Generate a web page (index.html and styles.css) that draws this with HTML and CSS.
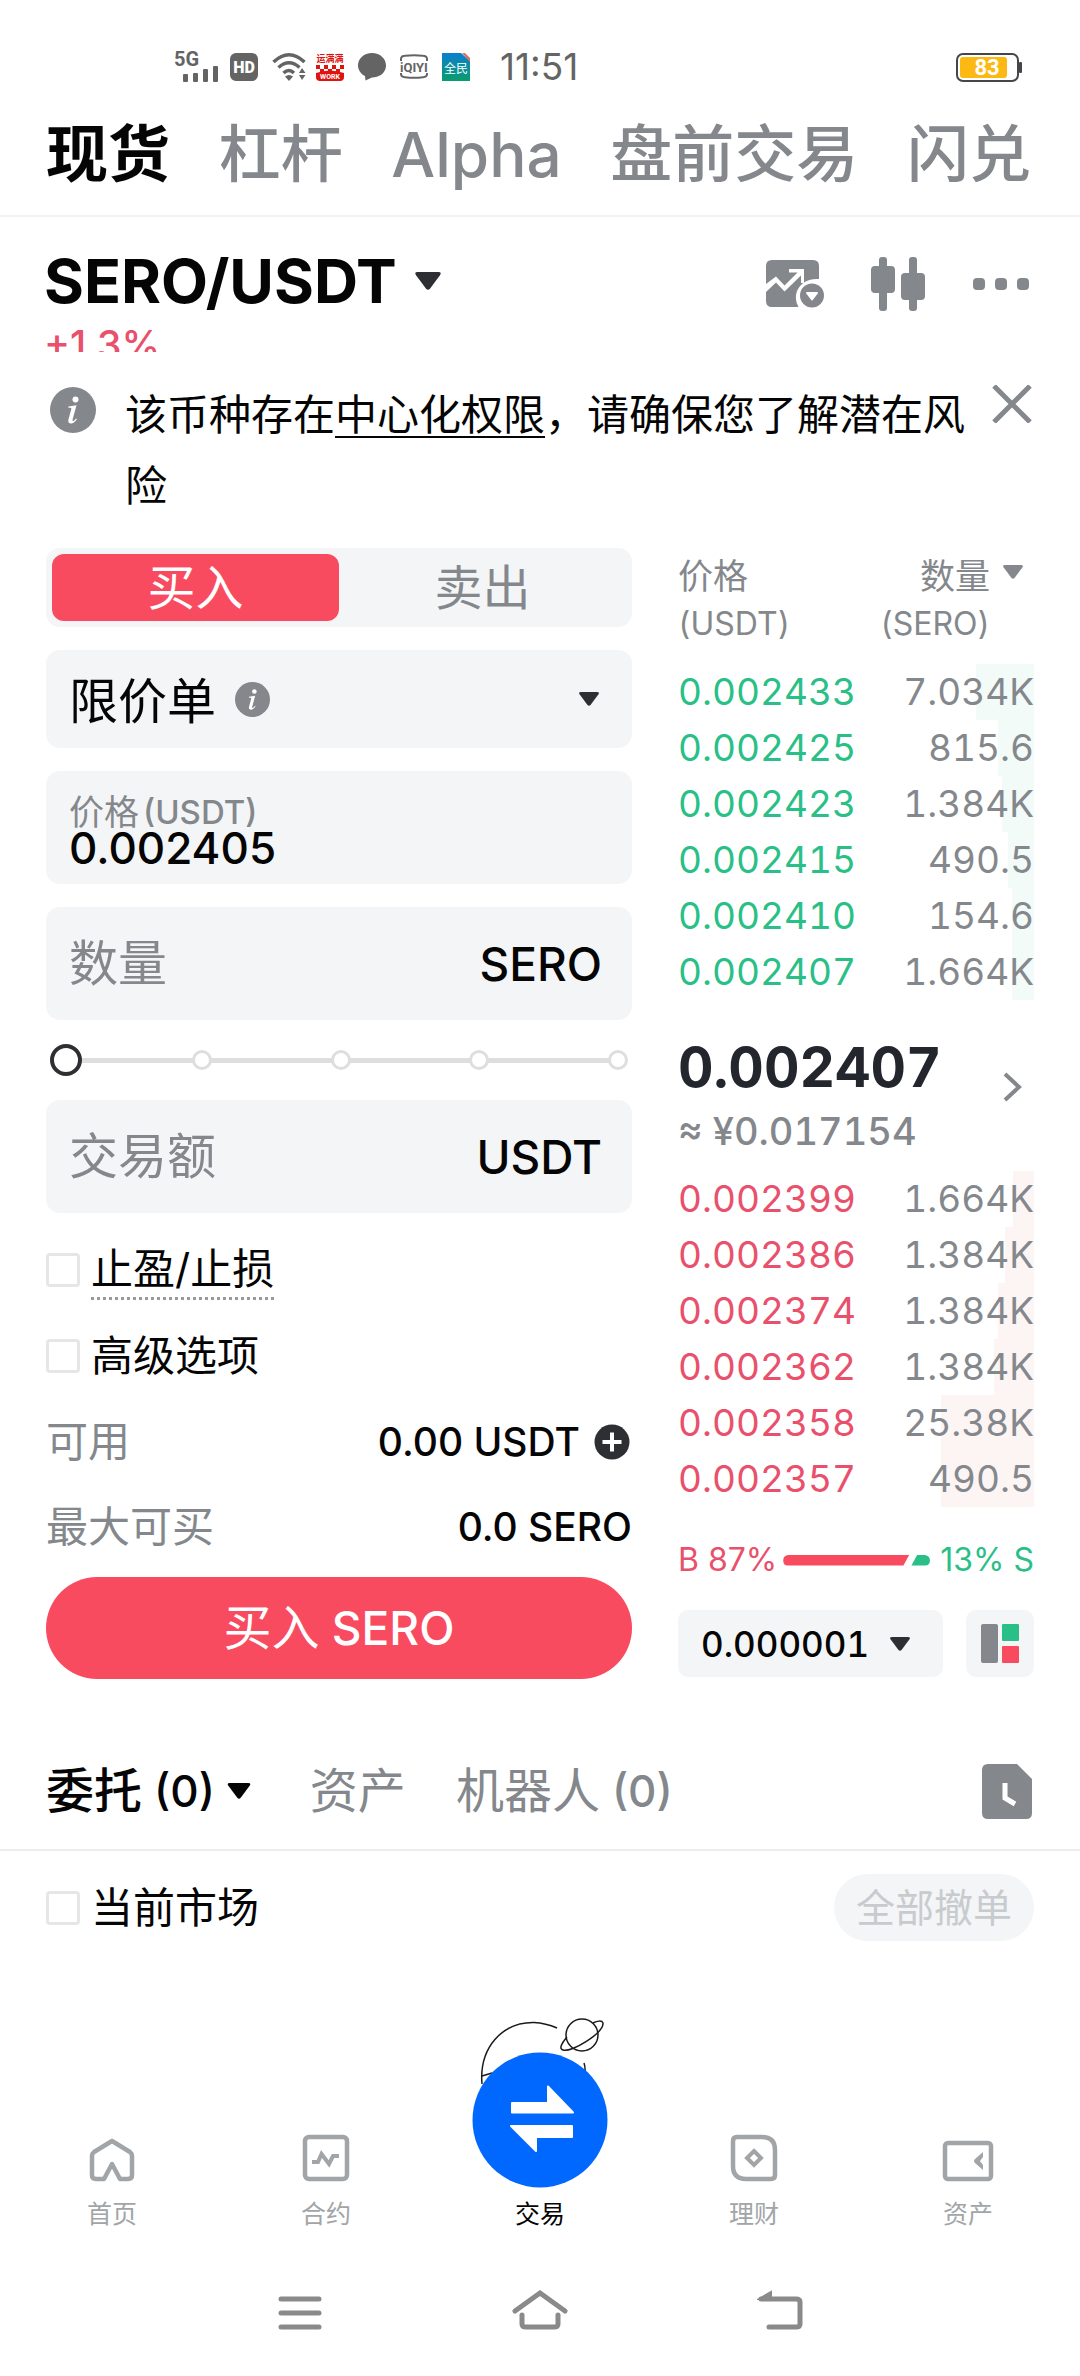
FILE: index.html
```html
<!DOCTYPE html>
<html lang="zh-CN">
<head>
<meta charset="utf-8">
<meta name="viewport" content="width=device-width, initial-scale=1">
<title>SERO/USDT 现货交易</title>
<link rel="stylesheet" href="styles.css">
</head>
<body>
<svg class="defs" width="0" height="0" aria-hidden="true">
  <symbol id="tri" viewBox="0 0 20 14"><path d="M2 0H18Q21 0 19.300 2.500L11.500 13Q10 14.500 8.500 13L.7 2.500Q-1 0 2 0Z" fill="currentColor"/></symbol>
  <symbol id="info" viewBox="0 0 46 46">
    <circle cx="23" cy="23" r="23" fill="#84888c"/>
    <circle cx="25.500" cy="12.500" r="3" fill="#fff"/>
    <path d="M18.500 19.500 26.500 18.200 22.600 32.500Q22.200 34.300 23.400 34 24.500 33.500 26 31.500L27 32.300Q23.500 37 20.500 36.500 17.500 36 18.500 32.300L21.300 22Q21.600 20.600 20.200 20.700L18.300 20.800Z" fill="#fff"/>
  </symbol>
</svg>

<div class="status">
  <div class="status-icons">
    <svg width="42" height="32" viewBox="0 0 42 32" fill="#646464"><text x="0" y="15" font-family="Roboto" font-size="20" font-weight="700">5G</text><rect x="9" y="23" width="5" height="8" rx="1"/><rect x="19" y="22" width="5" height="9" rx="1"/><rect x="29" y="18" width="5" height="13" rx="1"/><rect x="39" y="15" width="5" height="16" rx="1"/></svg>
    <svg width="28" height="28" viewBox="0 0 28 28"><rect width="28" height="28" rx="6" fill="#646464"/><text x="14" y="20" text-anchor="middle" font-family="Roboto" font-size="16" font-weight="900" fill="#fff">HD</text></svg>
    <svg width="30" height="28" viewBox="0 0 30 28" fill="none" stroke="#646464" stroke-width="3.500"><path d="M1.500 9Q17-5.500 32.500 9"/><path d="M6.500 14.500Q17 5 27.500 14.500"/><path d="M11.500 20Q17 15 22 20"/><path d="M13 23.500Q17 20.500 21 23.500L17 28Z" fill="#646464" stroke="none"/><path d="M27 20l3-5 3.500 5zM27 22h6.500l-3.500 5z" fill="#646464" stroke="none"/></svg>
    <svg width="28" height="28" viewBox="0 0 28 28"><text x="14" y="9" text-anchor="middle" font-family="Noto Sans CJK SC" font-size="9" font-weight="700" fill="#e0140f">运满满</text><path d="M0 12h4v4H0zM8 12h4v4H8zM16 12h4v4h-4zM24 12h4v4h-4zM4 16h4v4H4zM12 16h4v4h-4zM20 16h4v4h-4z" fill="#e0140f"/><path d="M0 20Q14 15 28 20V24Q28 28 24 28H4Q0 28 0 24Z" fill="#e0140f"/><text x="14" y="26" text-anchor="middle" font-family="Roboto" font-size="7" font-weight="700" fill="#fff">WORK</text></svg>
    <svg width="28" height="28" viewBox="0 0 28 28" fill="#646464"><path d="M14 0C22 0 28 5.500 28 12.500S22 24.500 14 24.500L7.500 27.500 7 23C3 21 0 17 0 12.500 0 5.500 6 0 14 0Z"/></svg>
    <svg width="28" height="28" viewBox="0 0 28 28"><path d="M1 8V6Q1 3 5 2.800 14 1.500 23 2.800 27 3 27 6V8M1 20V21Q1 24 5 24.200 14 25.500 23 24.200 27 24 27 21V20" fill="none" stroke="#646464" stroke-width="2"/><text x="14" y="19" text-anchor="middle" font-family="Roboto" font-size="13" font-weight="700" fill="#646464">iQIYI</text></svg>
    <svg width="28" height="28" viewBox="0 0 28 28"><defs><linearGradient id="g" x2="0" y2="1"><stop stop-color="#0a7fd0"/><stop offset="1" stop-color="#0a9c6c"/></linearGradient></defs><path d="M0 0H19L28 8V28H0Z" fill="url(#g)"/><path d="M20 0 28 9V5L23 0Z" fill="#d8706a"/><text x="14" y="20" text-anchor="middle" font-family="Noto Sans CJK SC" font-size="12" fill="#fff">全民</text></svg>
  </div>
  <time class="clock">11:51</time>
  <svg class="battery" width="66" height="29" viewBox="0 0 66 29"><rect x="1" y="1" width="61" height="27" rx="6" fill="#fff" stroke="#46464a" stroke-width="2"/><rect x="4" y="4" width="47" height="21" rx="3" fill="#fdb913"/><rect x="63" y="9" width="3" height="11" rx="1" fill="#46464a"/><text x="31" y="22" text-anchor="middle" font-family="Roboto" font-size="22" font-weight="700" fill="#fff">83</text></svg>
</div>

<nav class="modes">
  <a href="#" class="on">现货</a><a href="#">杠杆</a><a href="#">Alpha</a><a href="#">盘前交易</a><a href="#">闪兑</a>
</nav>

<header class="pair">
  <div class="pair-row">
    <button class="pair-name"><h1>SERO/USDT</h1><svg width="26" height="18"><use href="#tri"/></svg></button>
    <div class="pair-tools">
      <button aria-label="图表"><svg width="58" height="52" viewBox="0 0 58 52"><path d="M6 2H47Q53 2 53 8V21Q37 20 31 33 28 41 32.500 49H6Q0 49 0 43V34L10 24.500 18.500 33.500 35 17.500V25H38V11H23V14.500H31.500L18.500 27.500 10 18.500 0 26V8Q0 2 6 2Z" fill="#84888c"/><circle cx="46" cy="37.500" r="12" fill="#84888c"/><path d="M41 35H51L46 41.500Z" fill="#fff" stroke="#fff" stroke-width="2" stroke-linejoin="round"/></svg></button>
      <button aria-label="K线"><svg width="54" height="54" viewBox="0 0 54 54" fill="#84888c"><rect x="8" y="0" width="8" height="54" rx="3"/><rect x="0" y="9" width="24" height="27" rx="4"/><rect x="38" y="0" width="8" height="54" rx="3"/><rect x="30" y="16" width="24" height="27" rx="4"/></svg></button>
      <button aria-label="更多"><svg width="58" height="12" viewBox="0 0 58 12" fill="#84888c"><rect x="1" width="12" height="12" rx="4"/><rect x="23" width="12" height="12" rx="4"/><rect x="45" width="12" height="12" rx="4"/></svg></button>
    </div>
  </div>
  <div class="change">+1.3%</div>
</header>

<section class="notice">
  <svg class="notice-icon" width="46" height="46"><use href="#info"/></svg>
  <p>该币种存在<a href="#">中心化权限</a>，请确保您了解潜在风险</p>
  <button class="close" aria-label="关闭"><svg width="40" height="38" viewBox="0 0 40 38" fill="none" stroke="#84888c" stroke-width="5"><path d="M2 1 38 37M38 1 2 37"/></svg></button>
</section>

<main class="trade">
  <form class="order">
    <div class="side"><button type="button" class="on">买入</button><button type="button">卖出</button></div>

    <div class="box box-type">
      <select class="type" aria-label="订单类型"><option>限价单</option></select>
      <svg width="35" height="35"><use href="#info"/></svg>
      <svg class="caret" width="20" height="14"><use href="#tri"/></svg>
    </div>

    <div class="box box-price">
      <label for="price">价格<span>(USDT)</span></label>
      <input id="price" value="0.002405">
    </div>

    <div class="box box-field">
      <input id="qty" placeholder="数量"><label for="qty">SERO</label>
    </div>

    <div class="slider">
      <div class="ticks"><i></i><i></i><i></i><i></i></div>
      <input type="range" min="0" max="100" value="0" aria-label="比例">
    </div>

    <div class="box box-field">
      <input id="total" placeholder="交易额"><label for="total">USDT</label>
    </div>

    <div class="lines">
      <label class="check"><input type="checkbox"><span class="dotted">止盈/止损</span></label>
      <label class="check"><input type="checkbox"><span>高级选项</span></label>
      <div class="stat"><span>可用</span><b>0.00 USDT</b>
        <button type="button" aria-label="充值"><svg width="36" height="36" viewBox="0 0 36 36"><circle cx="18" cy="18" r="17.500" fill="#2d2f33"/><path d="M18 8.500V27.500M8.500 18H27.500" stroke="#fff" stroke-width="4"/></svg></button></div>
      <div class="stat"><span>最大可买</span><b>0.0 SERO</b></div>
    </div>

    <button type="button" class="submit">买入<span> SERO</span></button>
  </form>

  <section class="book">
    <table class="asks">
      <thead><tr><th>价格<br><span>(USDT)</span></th><th><div class="amount-head"><div>数量<br><span>(SERO)</span></div><svg width="20" height="14"><use href="#tri"/></svg></div></th></tr></thead>
      <tbody>
        <tr style="--depth:58px"><td>0.002433</td><td>7.034K</td></tr>
        <tr style="--depth:36px"><td>0.002425</td><td>815.6</td></tr>
        <tr style="--depth:32px"><td>0.002423</td><td>1.384K</td></tr>
        <tr style="--depth:26px"><td>0.002415</td><td>490.5</td></tr>
        <tr style="--depth:22px"><td>0.002410</td><td>154.6</td></tr>
        <tr style="--depth:22px"><td>0.002407</td><td>1.664K</td></tr>
      </tbody>
    </table>

    <a href="#" class="last">
      <span><strong>0.002407</strong><small>≈ ¥0.017154</small></span>
      <svg width="20" height="30" viewBox="0 0 20 30" fill="none" stroke="#84888c" stroke-width="4"><path d="M3 2 17 15 3 28"/></svg>
    </a>

    <table class="bids">
      <tbody>
        <tr style="--depth:21px"><td>0.002399</td><td>1.664K</td></tr>
        <tr style="--depth:29px"><td>0.002386</td><td>1.384K</td></tr>
        <tr style="--depth:36px"><td>0.002374</td><td>1.384K</td></tr>
        <tr style="--depth:40px"><td>0.002362</td><td>1.384K</td></tr>
        <tr style="--depth:93px"><td>0.002358</td><td>25.38K</td></tr>
        <tr style="--depth:93px"><td>0.002357</td><td>490.5</td></tr>
      </tbody>
    </table>

    <div class="ratio">
      <span class="buy">B 87%</span>
      <i class="bar-b" style="flex-grow:87"></i><i class="bar-s" style="flex-grow:13"></i>
      <span class="sell">13% S</span>
    </div>

    <div class="book-tools">
      <div class="precision"><select aria-label="精度"><option>0.000001</option></select><svg width="20" height="14"><use href="#tri"/></svg></div>
      <button class="layout" aria-label="盘口布局"><svg width="38" height="39" viewBox="0 0 38 39"><rect width="17" height="39" rx="2" fill="#84888c"/><rect x="21" width="17" height="17" rx="1" fill="#2bbf88"/><rect x="21" y="22" width="17" height="17" rx="1" fill="#f94b60"/></svg></button>
    </div>
  </section>
</main>

<nav class="tabs">
  <a href="#" class="on">委托<span>(0)</span><svg width="24" height="16"><use href="#tri"/></svg></a>
  <a href="#">资产</a>
  <a href="#">机器人<span>(0)</span></a>
  <button class="history" aria-label="历史"><svg width="50" height="55" viewBox="0 0 50 55"><path d="M6 0H35L50 15V49Q50 55 44 55H6Q0 55 0 49V6Q0 0 6 0Z" fill="#84888c"/><path d="M23 19V34L33 40" fill="none" stroke="#fff" stroke-width="5"/></svg></button>
</nav>

<section class="filter">
  <label class="check"><input type="checkbox"><span>当前市场</span></label>
  <button class="cancel-all" disabled>全部撤单</button>
</section>

<div class="empty">
  <svg width="140" height="86" viewBox="0 0 140 86" fill="none" stroke="#1a1a1a" stroke-width="1.500"><path d="M12 74C9 38 32 12 64 12.500 73 13 80 15 87 18"/><path d="M12 66 22 63M70 63Q77 60 84 63M114 53Q115.500 57 115 64"/><circle cx="112" cy="25" r="16"/><path d="M97 27C91 34 89 39 93 40 101 43 134 23 133 13 132 10 127 11 123 13"/></svg>
</div>

<footer class="dock">
  <nav class="app-nav">
    <a href="#"><svg width="46" height="44" viewBox="0 0 46 44" fill="none" stroke="#a2a5a8" stroke-width="4.500" stroke-linejoin="round"><path d="M3 18Q3 15.500 5 14L23 3 41 14Q43 15.500 43 18V37Q43 41 39 41H31L23 26 15 41H7Q3 41 3 37Z"/></svg><span>首页</span></a>
    <a href="#"><svg width="48" height="48" viewBox="0 0 48 48" fill="none" stroke="#a2a5a8" stroke-width="4.500"><rect x="3" y="3" width="42" height="42" rx="4"/><path d="M10 28H16L19.500 20 27 30 31 22H37" stroke-width="4"/></svg><span>合约</span></a>
    <a href="#" class="on"><svg class="swap" width="136" height="136" viewBox="0 0 136 136"><circle cx="68" cy="68" r="67.500" fill="#0068ff"/><path d="M40 51H76V34.500L101 60.500H40ZM100 74H39L64 99V85H100Z" fill="#fff" stroke="#fff" stroke-width="2" stroke-linejoin="round"/></svg><span>交易</span></a>
    <a href="#"><svg width="48" height="48" viewBox="0 0 48 48" fill="none" stroke="#a2a5a8" stroke-width="4.500"><path d="M7 3H32Q45 3 45 16V41Q45 45 41 45H16Q3 45 3 32V7Q3 3 7 3Z"/><path d="M24 17 31 24 24 31 17 24Z" stroke-width="4"/></svg><span>理财</span></a>
    <a href="#"><svg width="52" height="42" viewBox="0 0 52 42" fill="none" stroke="#a2a5a8" stroke-width="4.500"><rect x="3" y="3" width="46" height="36" rx="3"/><path d="M41 12V17L38 21 41 25V30L33 23Q31 21 33 19Z" fill="#a2a5a8" stroke="none"/></svg><span>资产</span></a>
  </nav>
  <nav class="sys-nav">
    <button aria-label="菜单"><svg width="44" height="40" viewBox="0 0 44 40" stroke="#8a8a8a" stroke-width="5" stroke-linecap="round"><path d="M3 9H41M3 23H41M3 37H41"/></svg></button>
    <button aria-label="主页"><svg width="56" height="40" viewBox="0 0 56 40" fill="none" stroke="#8a8a8a" stroke-width="5" stroke-linecap="round"><path d="M3 21 28 3 53 21M10 25V34Q10 37 14 37H42Q46 37 46 34V25"/></svg></button>
    <button aria-label="返回"><svg width="46" height="40" viewBox="0 0 46 40" fill="none" stroke="#8a8a8a" stroke-width="5" stroke-linecap="round"><path d="M4 9H39Q43 9 43 12V34Q43 37 39 37H12"/><path d="M2 9 14 2V9Z" fill="#8a8a8a" stroke-width="2"/></svg></button>
  </nav>
</footer>
</body>
</html>
```

FILE: styles.css
```css
* { box-sizing: border-box; }

body {
  margin: 0;
  min-height: 100vh;
  display: flex;
  flex-direction: column;
  background: #fff;
  color: #050505;
  font: 400 42px/48px Inter, "Noto Sans CJK SC", sans-serif;
}

svg { display: block; flex: none; }
.defs { position: absolute; }

button, input, select {
  margin: 0;
  padding: 0;
  border: 0;
  background: none;
  color: inherit;
  font: inherit;
  outline: 0;
}
select { appearance: none; }
a { color: inherit; text-decoration: none; }

/* status bar */
.status {
  display: flex;
  align-items: center;
  padding: 50px 58px 0 174px;
  height: 84px;
}
.status-icons { display: flex; align-items: center; gap: 14px; }
.status svg { overflow: visible; }
.clock {
  margin-left: 30px;
  color: #646464;
  font-size: 37px;
  line-height: 36px;
}
.battery { margin-left: auto; }

/* trading modes */
.modes {
  display: flex;
  justify-content: space-between;
  padding: 31px 49px 20px 46px;
  border-bottom: 2px solid #f2f2f2;
  color: #84888c;
  font-size: 62px;
  font-weight: 500;
  line-height: 80px;
  white-space: nowrap;
}
.modes .on { color: #050505; font-weight: 600; }

/* pair */
.pair { padding: 32px 50px 0 44px; }
.pair-row { display: flex; justify-content: space-between; align-items: center; height: 64px; }
.pair-name { display: flex; align-items: center; gap: 18px; color: #2d2f33; }
.pair-name h1 { margin: 0; color: #050505; font-size: 61px; font-weight: 700; line-height: 60px; }
.pair-tools { display: flex; align-items: center; gap: 47px; padding-top: 6px; }
.change {
  height: 30px;
  margin-top: 9px;
  overflow: hidden;
  color: #e9506b;
  font-size: 39px;
  font-weight: 500;
  line-height: 46px;
}

/* notice */
.notice { display: flex; padding: 27px 46px; }
.notice-icon { margin: 8px 29px 0 4px; }
.notice p { flex: 1; margin: 0; line-height: 71px; }
.notice a { text-decoration: underline; text-decoration-thickness: 2px; text-underline-offset: 6px; }
.close { align-self: flex-start; margin: 6px 2px 0 26px; }

/* trade area */
.trade {
  display: grid;
  grid-template-columns: minmax(0, 586fr) minmax(0, 356fr);
  column-gap: 46px;
  padding: 0 46px;
}

.side {
  display: grid;
  grid-template-columns: 1fr 1fr;
  padding: 6px;
  border-radius: 14px;
  background: #f4f5f7;
  color: #84888c;
  font-size: 48px;
  line-height: 67px;
}
.side button { border-radius: 12px; }
.side .on { background: #f94b60; color: #fff; }

.box {
  margin-top: 23px;
  padding: 0 23px;
  border-radius: 14px;
  background: #f4f5f7;
}
.box-type { display: flex; align-items: center; height: 98px; }
.type { margin-right: 18px; padding-top: 6px; font-size: 49px; line-height: 64px; }
.caret { margin-left: auto; margin-right: 10px; color: #2d2f33; }

.box-price { height: 113px; padding-top: 24px; }
.box-price label { display: flex; gap: 4px; color: #84888c; font-size: 35px; line-height: 34px; }
.box-price span { font-size: 33px; font-weight: 500; }
.box-price input { display: block; width: 100%; height: 38px; font-size: 44px; font-weight: 500; line-height: 38px; }

.box-field { display: flex; align-items: center; height: 113px; padding-right: 30px; }
.box-field input { flex: 1; min-width: 0; height: 64px; font-size: 49px; }
.box-field input::placeholder { color: #84888c; opacity: 1; }
.box-field label { font-size: 46px; font-weight: 500; }

/* amount slider */
.slider { position: relative; height: 80px; padding: 0 4px; }
.slider + .box { margin-top: 0; }
.slider input {
  appearance: none;
  display: block;
  width: 100%;
  height: 80px;
  background: linear-gradient(#dedede, #dedede) center / calc(100% - 20px) 5px no-repeat;
}
.slider input::-webkit-slider-thumb {
  appearance: none;
  width: 32px;
  height: 32px;
  border: 4px solid #2d2f33;
  border-radius: 50%;
  background: #fff;
}
.ticks {
  position: absolute;
  inset: 0 4px 0 146px;
  display: flex;
  justify-content: space-between;
  align-items: center;
  pointer-events: none;
}
.ticks i { width: 20px; height: 20px; border: 3px solid #dedede; border-radius: 50%; background: #fff; }

/* options and balances */
.lines { padding-top: 14px; }
.check { display: flex; align-items: center; gap: 11px; }
.lines .check { height: 86px; }
.check input {
  appearance: none;
  width: 34px;
  height: 34px;
  border: 3px solid #e6e6e6;
  border-radius: 4px;
}
.dotted { padding: 4px 0; border-bottom: 3px dotted #9a9a9a; }
.stat { display: flex; align-items: center; height: 85px; }
.stat span { margin-right: auto; color: #84888c; }
.stat b { font-size: 39px; font-weight: 500; }
.stat button { margin: 0 2px 0 14px; }
.submit {
  display: block;
  width: 100%;
  margin-top: 8px;
  border-radius: 51px;
  background: #f94b60;
  color: #fff;
  font-size: 48px;
  line-height: 101px;
}
.submit span { font-size: 46px; font-weight: 500; }

/* order book */
table { width: 100%; border-collapse: collapse; font-size: 37px; }
table, .last, .precision { font-feature-settings: "tnum"; }
th, td { padding: 0; text-align: left; font-weight: 400; }
td { height: 56px; }
th:last-child, td:last-child { text-align: right; color: #84888c; }
th { height: 116px; padding-top: 5px; color: #84888c; font-size: 35px; line-height: 46px; vertical-align: top; }
th span { font-size: 32px; }
.amount-head { display: flex; justify-content: flex-end; gap: 13px; padding-right: 11px; }
.amount-head svg { margin-top: 12px; }
tbody tr { background: linear-gradient(var(--tint), var(--tint)) right / var(--depth) 100% no-repeat; }
.asks { --tint: #f2fbf8; color: #2bbf88; }
.bids { --tint: #fdf4f4; color: #e9506b; }

.last { display: flex; justify-content: space-between; align-items: center; padding: 35px 12px 8px 0; }
.last strong, .last small { display: block; line-height: 64px; }
.last strong { color: #24262e; font-size: 55px; font-weight: 700; }
.last small { color: #84888c; font-size: 38px; font-weight: 500; }
.last svg { margin-bottom: 24px; }

.ratio { display: flex; align-items: center; height: 46px; margin-top: 30px; font-size: 32px; white-space: nowrap; }
.ratio i { flex-basis: 0; height: 11px; }
.bar-b { margin-left: 6px; border-radius: 6px 0 0 6px; background: #f94b60; clip-path: polygon(0 0, 100% 0, calc(100% - 6px) 100%, 0 100%); }
.bar-s { margin: 0 10px 0 2px; border-radius: 0 6px 6px 0; background: #2bbf88; clip-path: polygon(6px 0, 100% 0, 100% 100%, 0 100%); }
.buy { color: #e9506b; }
.sell { color: #2bbf88; }

.book-tools { display: flex; gap: 23px; margin-top: 27px; }
.precision, .layout { border-radius: 10px; background: #f4f5f7; }
.precision { flex: 1; display: flex; align-items: center; gap: 20px; height: 67px; padding-left: 23px; color: #2d2f33; }
.precision select { color: #050505; font-size: 35px; font-weight: 500; }
.layout { display: flex; justify-content: center; align-items: center; width: 68px; height: 67px; }

/* orders */
.tabs {
  display: flex;
  align-items: center;
  margin-top: 72px;
  padding: 0 48px 18px 46px;
  border-bottom: 2px solid #ececec;
  color: #84888c;
  font-size: 48px;
  line-height: 80px;
  white-space: nowrap;
}
.tabs a { display: flex; align-items: center; gap: 12px; margin-right: 50px; }
.tabs a:first-child { margin-right: 59px; }
.tabs span { font-size: 44px; font-weight: 500; }
.tabs .on { color: #050505; font-weight: 500; }
.history { margin-left: auto; }

.filter { display: flex; justify-content: space-between; align-items: center; padding: 23px 46px 0; }
.cancel-all {
  padding: 0 22px;
  border-radius: 34px;
  background: #f4f5f7;
  color: #c8cbce;
  font-size: 39px;
  line-height: 67px;
}

.empty { display: flex; justify-content: center; padding-top: 69px; }

/* bottom bars */
.dock { background: #fff; }
.app-nav { display: grid; grid-template-columns: repeat(5, 1fr); padding: 0 5px; color: #a2a5a8; font-size: 25px; line-height: 36px; }
.app-nav a {
  position: relative;
  display: flex;
  flex-direction: column;
  justify-content: flex-end;
  align-items: center;
  gap: 14px;
  height: 136px;
}
.app-nav .on { color: #050505; }
.swap { position: absolute; top: -44px; }
.sys-nav { display: grid; grid-template-columns: repeat(3, 240px); justify-content: center; padding: 58px 0 44px; }
.sys-nav button { display: flex; justify-content: center; }
```
